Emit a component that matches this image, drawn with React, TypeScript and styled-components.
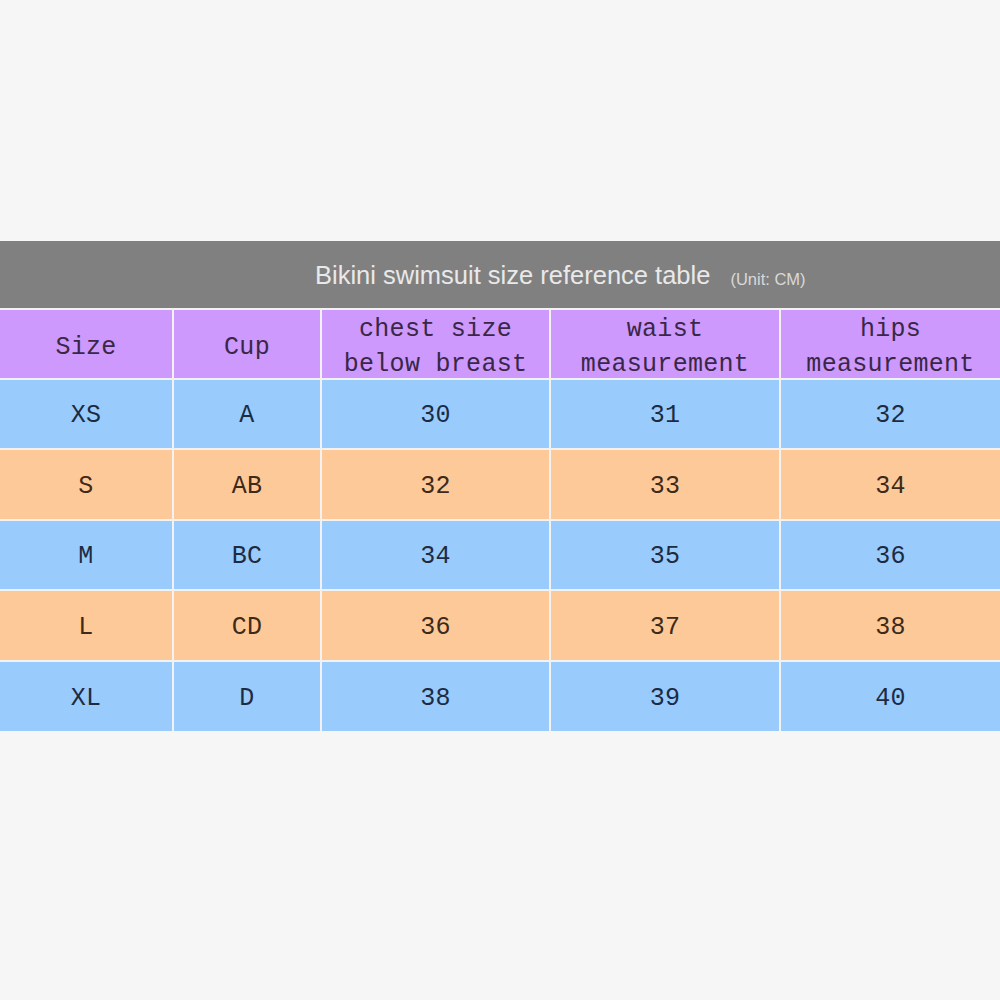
import React from "react";
import styled, { createGlobalStyle } from "styled-components";

const Global = createGlobalStyle`
  html, body { margin: 0; padding: 0; background: #f6f6f6; }
  body { font-family: "Liberation Sans", Arial, sans-serif; }
`;

const Page = styled.div`
  width: 1000px;
  height: 1000px;
  padding-top: 241px;
  box-sizing: border-box;
  background: #f6f6f6;
`;

const TitleBar = styled.div`
  height: 67px;
  background: #808080;
  display: flex;
  align-items: center;
  padding-left: 315px;
  box-sizing: border-box;
  gap: 20px;
`;

const Title = styled.span`
  font-family: "Liberation Sans", Arial, sans-serif;
  font-size: 25.5px;
  color: #e9e9e9;
  line-height: 1;
  margin-top: 2px;
`;

const Unit = styled.span`
  font-family: "Liberation Sans", Arial, sans-serif;
  font-size: 16.5px;
  color: #d9d9d9;
  margin-top: 9px;
`;

const Table = styled.div`
  display: grid;
  grid-template-rows: 68px 68px 69px 68px 69px 69px;
  row-gap: 2px;
  padding-top: 2px;
  background: #f2f2f2;
`;

type Tone = "head" | "blue" | "orange";

const bg: Record<Tone, string> = {
  head: "#cd99fc",
  blue: "#99cbfd",
  orange: "#fec998",
};
const fg: Record<Tone, string> = {
  head: "#3a2748",
  blue: "#1d2b42",
  orange: "#3d2a18",
};

const Row = styled.div`
  display: grid;
  grid-template-columns: 172px 146px 227px 228px 1fr;
  column-gap: 2px;
`;

const Cell = styled.div<{ $tone: Tone }>`
  background: ${(p) => bg[p.$tone]};
  color: ${(p) => fg[p.$tone]};
  display: flex;
  align-items: center;
  justify-content: center;
  text-align: center;
  font-family: "Liberation Mono", "Courier New", monospace;
  font-size: 25px;
  letter-spacing: 0.3px;
  white-space: pre;
  overflow: hidden;
  padding-top: 3px;
  box-sizing: border-box;
`;

const HeadCell = styled(Cell)<{ $two?: boolean }>`
  align-items: ${(p) => (p.$two ? "flex-start" : "center")};
  padding-top: ${(p) => (p.$two ? "2px" : "6px")};
`;

const HeadText = styled.div`
  line-height: 35px;
`;

const headers: { text: string; two?: boolean }[] = [
  { text: "Size" },
  { text: "Cup" },
  { text: "chest size\nbelow breast", two: true },
  { text: "waist\nmeasurement", two: true },
  { text: "hips\nmeasurement", two: true },
];

const rows: string[][] = [
  ["XS", "A", "30", "31", "32"],
  ["S", "AB", "32", "33", "34"],
  ["M", "BC", "34", "35", "36"],
  ["L", "CD", "36", "37", "38"],
  ["XL", "D", "38", "39", "40"],
];

export default function App() {
  return (
    <Page>
      <Global />
      <TitleBar>
        <Title>Bikini swimsuit size reference table</Title>
        <Unit>(Unit: CM)</Unit>
      </TitleBar>
      <Table>
        <Row>
          {headers.map((h) => (
            <HeadCell key={h.text} $tone="head" $two={h.two}>
              <HeadText>{h.text}</HeadText>
            </HeadCell>
          ))}
        </Row>
        {rows.map((r, i) => (
          <Row key={r[0]}>
            {r.map((v, j) => (
              <Cell key={j} $tone={i % 2 === 0 ? "blue" : "orange"}>
                {v}
              </Cell>
            ))}
          </Row>
        ))}
      </Table>
    </Page>
  );
}
